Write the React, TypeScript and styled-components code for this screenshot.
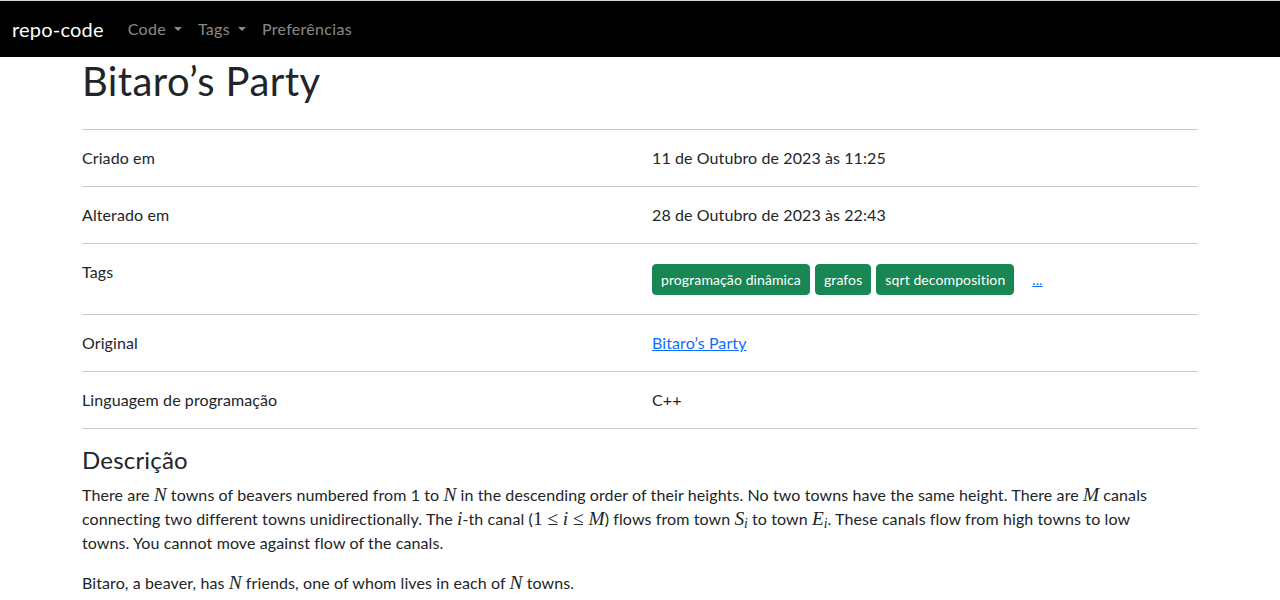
import React from "react";
import styled, { createGlobalStyle } from "styled-components";

const FONT = `Lato, "Noto Sans", sans-serif`;

const GlobalStyle = createGlobalStyle`
  html, body { margin: 0; padding: 0; background: #fff; }
  body {
    font-family: ${FONT};
    font-size: 16px;
    line-height: 1.5;
    letter-spacing: 0.1px;
    color: #212529;
  }
  * { box-sizing: border-box; }
`;

const Navbar = styled.nav`
  display: flex;
  align-items: center;
  height: 57px;
  border-top: 1px solid #d4d4d4;
  background: #000;
  padding: 0 12px;
`;

const Brand = styled.a`
  font-size: 20px;
  line-height: 30px;
  letter-spacing: 0.2px;
  color: #fff;
  text-decoration: none;
  margin-right: 16px;
`;

const NavLinks = styled.div`
  display: flex;
  align-items: center;
`;

const NavLink = styled.a<{ $caret?: boolean }>`
  color: rgba(255, 255, 255, 0.55);
  font-size: 16px;
  line-height: 24px;
  letter-spacing: 0.3px;
  padding: 8px;
  text-decoration: none;
  &::after {
    content: ${(p) => (p.$caret ? '""' : "none")};
    display: inline-block;
    margin-left: 0.5em;
    vertical-align: 0.255em;
    border-top: 0.3em solid;
    border-right: 0.3em solid transparent;
    border-left: 0.3em solid transparent;
    border-bottom: 0;
  }
`;

const Container = styled.main`
  max-width: 1140px;
  margin: 0 auto;
  padding: 0 12px;
`;

const Title = styled.h1`
  font-size: 40px;
  font-weight: 400;
  line-height: 1.2;
  letter-spacing: 0.4px;
  margin: 0;
`;

const InfoList = styled.div`
  margin-top: 24px;
  border-bottom: 1px solid #c8c9ca;
`;

const InfoRow = styled.div`
  display: grid;
  grid-template-columns: 1fr 1fr;
  column-gap: 24px;
  border-top: 1px solid #c8c9ca;
  padding: 16px 0;
`;

const Label = styled.div`
  line-height: 24px;
`;

const Value = styled.div`
  line-height: 24px;
`;

const TagList = styled.div`
  display: flex;
  align-items: center;
  padding-top: 4px;
  margin-bottom: 3px;
`;

const TagButton = styled.a`
  display: inline-block;
  background: #198754;
  border: 1px solid #198754;
  color: #fff;
  font-size: 14px;
  line-height: 21px;
  padding: 4px 8px;
  border-radius: 4px;
  text-decoration: none;
  margin-right: 5px;
`;

const MoreLink = styled.a`
  color: #0d6efd;
  font-size: 14px;
  margin-left: 13px;
  text-decoration: underline;
`;

const Link = styled.a`
  color: #0d6efd;
  text-decoration: underline;
`;

const SectionTitle = styled.h4`
  font-size: 24px;
  font-weight: 400;
  line-height: 1.2;
  letter-spacing: 0.2px;
  margin: 17px 0 8px;
`;

const Paragraph = styled.p`
  margin: 0 0 16px;
  line-height: 24px;
`;

const M = styled.span`
  font-family: "Liberation Serif", "DejaVu Serif", serif;
  font-style: italic;
  font-size: 1.21em;
  line-height: 1;
  letter-spacing: 0;
`;

const MR = styled.span<{ $op?: boolean }>`
  font-family: "Liberation Serif", "DejaVu Serif", serif;
  font-size: 1.21em;
  line-height: 1;
  letter-spacing: 0;
  margin: 0 ${(p) => (p.$op ? "0.25em" : "0")};
`;

const Sub = styled.sub`
  font-size: 0.7em;
  vertical-align: -0.25em;
  line-height: 0;
`;

export default function App() {
  return (
    <>
      <GlobalStyle />
      <Navbar>
        <Brand>repo-code</Brand>
        <NavLinks>
          <NavLink $caret>Code</NavLink>
          <NavLink $caret>Tags</NavLink>
          <NavLink>Preferências</NavLink>
        </NavLinks>
      </Navbar>
      <Container>
        <Title>Bitaro’s Party</Title>
        <InfoList>
          <InfoRow>
            <Label>Criado em</Label>
            <Value>11 de Outubro de 2023 às 11:25</Value>
          </InfoRow>
          <InfoRow>
            <Label>Alterado em</Label>
            <Value>28 de Outubro de 2023 às 22:43</Value>
          </InfoRow>
          <InfoRow>
            <Label>Tags</Label>
            <TagList>
              <TagButton>programação dinâmica</TagButton>
              <TagButton>grafos</TagButton>
              <TagButton>sqrt decomposition</TagButton>
              <MoreLink>...</MoreLink>
            </TagList>
          </InfoRow>
          <InfoRow>
            <Label>Original</Label>
            <Value>
              <Link>Bitaro’s Party</Link>
            </Value>
          </InfoRow>
          <InfoRow>
            <Label>Linguagem de programação</Label>
            <Value>C++</Value>
          </InfoRow>
        </InfoList>
        <SectionTitle>Descrição</SectionTitle>
        <Paragraph>
          There are <M>N</M> towns of beavers numbered from 1 to <M>N</M> in the descending order of
          their heights. No two towns have the same height. There are <M>M</M> canals connecting two
          different towns unidirectionally. The <M>i</M>-th canal (<MR>1</MR>
          <MR $op>≤</MR>
          <M>i</M>
          <MR $op>≤</MR>
          <M>M</M>) flows from town <M>S</M>
          <Sub>
            <M>i</M>
          </Sub>{" "}
          to town <M>E</M>
          <Sub>
            <M>i</M>
          </Sub>
          . These canals flow from high towns to low
          <br />
          towns. You cannot move against flow of the canals.
        </Paragraph>
        <Paragraph>
          Bitaro, a beaver, has <M>N</M> friends, one of whom lives in each of <M>N</M> towns.
        </Paragraph>
      </Container>
    </>
  );
}
